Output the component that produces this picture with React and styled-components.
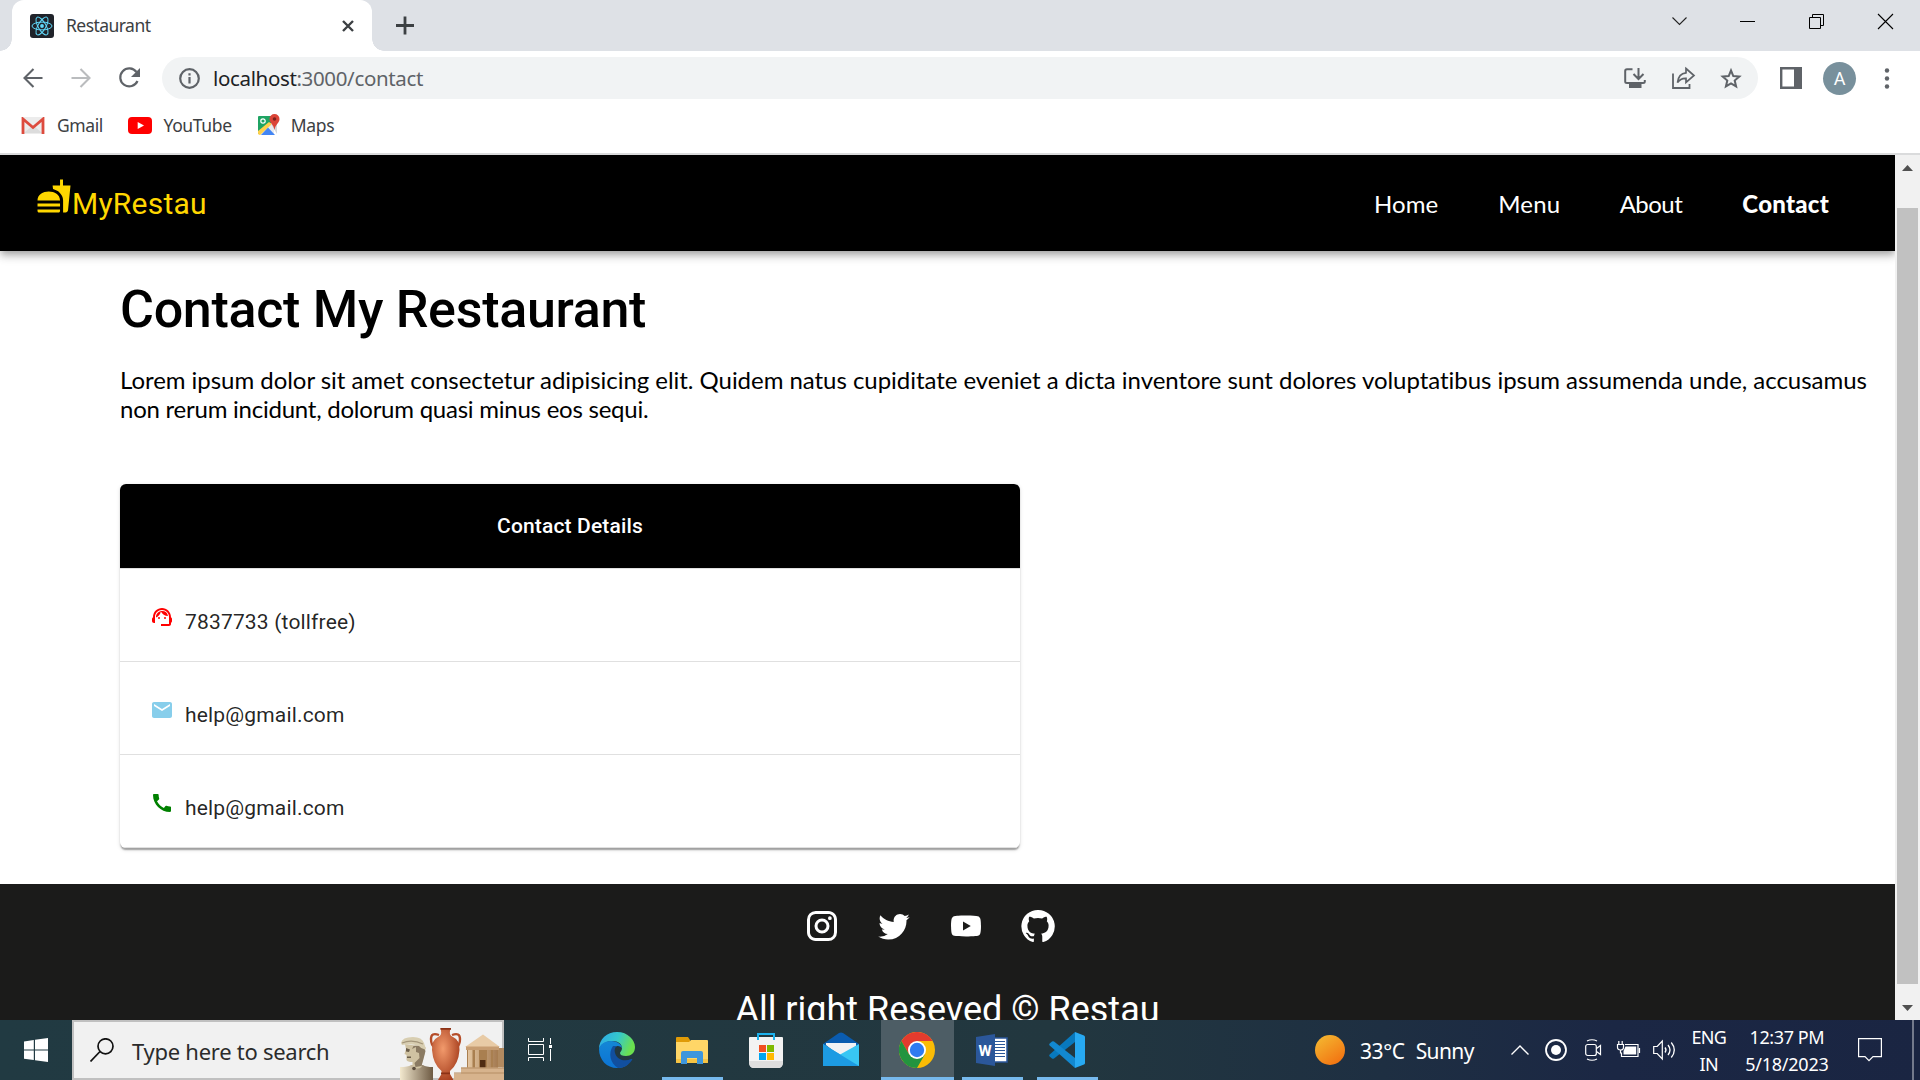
import React from "react";
import styled, { createGlobalStyle } from "styled-components";
import { MdSupportAgent, MdEmail, MdCall, MdFastfood } from "react-icons/md";

const Global = createGlobalStyle`
  * { box-sizing: border-box; }
  body { margin: 0; overflow: hidden; background: #fff; }
  svg { display: block; flex: none; }
`;

const SEGOE = `"Noto Sans", "Open Sans", sans-serif`;
const URBAN = `Lato, "Open Sans", sans-serif`;

const Screen = styled.div`
  width: 1920px;
  height: 1080px;
  display: flex;
  flex-direction: column;
  overflow: hidden;
  font-family: ${SEGOE};
  white-space: nowrap;
`;

const Label = styled.span`
  font-size: ${(p) => p.$size || 18}px;
  line-height: ${(p) => p.$lh || 24}px;
  letter-spacing: ${(p) => p.$ls || 0}px;
  color: ${(p) => p.$color || "inherit"};
  margin-left: ${(p) => p.$ml || 0}px;
  padding-top: ${(p) => p.$pt || 0}px;
  padding-bottom: ${(p) => p.$pb || 0}px;
  flex: none;
`;

const Glyph = styled.svg`
  margin-left: ${(p) => p.$ml || 0}px;
  overflow: visible;
`;

/* ---------- browser chrome ---------- */
const TabStrip = styled.div`
  height: 51px;
  flex: none;
  background: #dee1e6;
  display: flex;
  align-items: stretch;
`;
const TabCurve = styled.div`
  width: 12px;
  height: 12px;
  align-self: flex-end;
  background: radial-gradient(circle at ${(p) => (p.$right ? "100%" : "0")} 0, #dee1e6 11.5px, #fff 12px);
`;
const Tab = styled.div`
  width: 360px;
  background: #fff;
  border-radius: 12px 12px 0 0;
  display: flex;
  align-items: center;
  padding: 0 18px;
  color: #3c4043;
`;
const Favicon = styled.div`
  width: 24px;
  height: 24px;
  border-radius: 3px;
  background: #20232a;
  display: grid;
  place-items: center;
`;
const Spacer = styled.div`
  flex: 1;
`;
const WindowButtons = styled.div`
  display: flex;
  align-items: center;
  height: 43px;
  padding-right: 27px;
`;
const Toolbar = styled.div`
  height: 54px;
  flex: none;
  background: #fff;
  display: flex;
  align-items: center;
  padding: 0 0 0 23px;
`;
const Omnibox = styled.div`
  width: 1596px;
  height: 42px;
  border-radius: 21px;
  margin-left: 22px;
  background: #f1f3f4;
  display: flex;
  align-items: center;
  padding: 0 16px 0 17px;
`;
const Host = styled.span`
  color: #202124;
`;
const Avatar = styled.div`
  width: 33px;
  height: 33px;
  border-radius: 50%;
  margin-left: 21px;
  background: #78909c;
  color: #fff;
  font: 400 18px/34px Roboto, sans-serif;
  text-align: center;
`;
const Bookmarks = styled.div`
  height: 50px;
  flex: none;
  display: flex;
  align-items: center;
  padding: 0 0 8px 21px;
  border-bottom: 2px solid #dadbdc;
  background: #fff;
  color: #3c4043;
`;

/* ---------- page ---------- */
const Viewport = styled.div`
  flex: 1;
  min-height: 0;
  display: flex;
`;
const Page = styled.main`
  width: 1895px;
  height: 865px;
  display: flex;
  flex-direction: column;
  overflow: hidden;
  background: #fff;
`;
const NavBar = styled.header`
  height: 96px;
  flex: none;
  background: #000;
  display: flex;
  align-items: center;
  padding: 0 66px 0 36px;
  box-shadow: 0 3px 6px -1.5px rgba(0, 0, 0, 0.2), 0 6px 7.5px rgba(0, 0, 0, 0.14),
    0 1.5px 15px rgba(0, 0, 0, 0.12);
`;
const Brand = styled.div`
  flex: 1;
  display: flex;
  align-items: center;
  color: #ffd700;
  font: 400 30px/48px Roboto, sans-serif;
  letter-spacing: 0.225px;
  padding-top: 2px;
  svg {
    margin-top: -17px;
  }
`;
const NavLink = styled.a`
  font-family: ${URBAN};
  font-size: 24px;
  line-height: 30px;
  padding-top: 1px;
  margin-left: ${(p) => p.$ml || 0}px;
  letter-spacing: ${(p) => p.$ls || 0}px;
  font-weight: ${(p) => (p.$active ? 900 : 400)};
  color: #fff;
`;
const Content = styled.section`
  padding: 0 0 0 120px;
  height: 633px;
  flex: none;
`;
const Heading = styled.h1`
  margin: 23px 0 0;
  font: 500 52px/72px Roboto, sans-serif;
  letter-spacing: -0.3px;
  color: #000;
`;
const Paragraph = styled.p`
  margin: 19px 0 0;
  font: 400 24px/29px ${URBAN};
  font-variant-ligatures: none;
  color: #000;
`;
const Line = styled.span`
  display: block;
  letter-spacing: ${(p) => p.$ls}px;
`;
const ContactTable = styled.div`
  width: 900px;
  margin-top: 61px;
  border-radius: 6px;
  overflow: hidden;
  background: #fff;
  box-shadow: 0 3px 1.5px -1.5px rgba(0, 0, 0, 0.2), 0 1.5px 1.5px rgba(0, 0, 0, 0.14),
    0 1.5px 4.5px rgba(0, 0, 0, 0.12);
`;
const TableHead = styled.div`
  height: 85px;
  background: #000;
  border-bottom: 1px solid #e0e0e0;
  color: #fff;
  font: 500 21px/84px Roboto, sans-serif;
  letter-spacing: 0.15px;
  text-align: center;
`;
const TableRow = styled.div`
  height: 93px;
  border-bottom: 1px solid #e0e0e0;
  display: flex;
  align-items: flex-start;
  padding: 36px 0 0 30px;
  color: rgba(0, 0, 0, 0.87);
  font: 400 21px/34px Roboto, sans-serif;
  letter-spacing: 0.17px;
`;
const RowText = styled.span`
  margin-left: 11px;
`;
const Footer = styled.footer`
  flex: 1;
  background: #1b1b1a;
  color: #fff;
  padding-top: 24px;
  overflow: hidden;
`;
const Socials = styled.div`
  display: flex;
  gap: 36px;
  padding-left: 804px;
`;
const Copyright = styled.div`
  margin-top: 42px;
  text-align: center;
  font: 400 36px/48px Roboto, sans-serif;
`;
const ScrollBar = styled.div`
  width: 25px;
  background: #f1f1f1;
  display: flex;
  flex-direction: column;
  align-items: center;
  padding: 10px 0 0;
`;
const Thumb = styled.div`
  width: 21px;
  height: 776px;
  flex: none;
  margin: 37px 0 21px;
  background: #c1c1c1;
`;

/* ---------- taskbar ---------- */
const TaskBar = styled.div`
  height: 60px;
  flex: none;
  display: flex;
  align-items: center;
  background: linear-gradient(90deg, #213a42 0, #22373f 55%, #1e2f42 72%, #1b2744 84%, #1a2542 100%);
  color: #fff;
`;
const StartButton = styled.div`
  width: 72px;
  padding-left: 24px;
`;
const SearchBox = styled.div`
  width: 432px;
  height: 60px;
  background: #f1f1f1;
  border: 2px solid #c0c0c0;
  display: flex;
  align-items: center;
  color: #2b2b2b;
  padding-left: 16px;
`;
const Artwork = styled.svg`
  align-self: flex-end;
  margin: 0 -2px -2px 0;
`;
const AppButton = styled.div`
  width: ${(p) => p.$w}px;
  height: 60px;
  margin-left: ${(p) => p.$ml || 0}px;
  background: ${(p) => (p.$active ? "#4d5d65" : "transparent")};
  border-bottom: 3px solid ${(p) => (p.$open ? "#76b9ed" : "transparent")};
  padding: 3px 1px 0 0;
  display: grid;
  place-items: center;
`;
const Sun = styled.div`
  width: 30px;
  height: 30px;
  border-radius: 50%;
  margin-left: 217px;
  background: linear-gradient(145deg, #f4bd33, #f2690d);
`;
const Stack = styled.div`
  display: flex;
  flex-direction: column;
  align-items: center;
  width: ${(p) => p.$w}px;
  margin-left: ${(p) => p.$ml}px;
  padding-top: 1px;
`;
const ShowDesktop = styled.div`
  width: 2px;
  height: 60px;
  background: #737a8c;
  margin-left: 30px;
`;

const stroke = (c, w = 2) => ({ fill: "none", stroke: c, strokeWidth: w });

function ReactMark() {
  return (
    <svg width="22" height="22" viewBox="-11 -11 22 22" fill="none" stroke="#61dafb" strokeWidth="1">
      <circle r="1.9" fill="#61dafb" stroke="none" />
      {[0, 60, 120].map((a) => (
        <ellipse key={a} rx="10" ry="3.9" transform={`rotate(${a})`} />
      ))}
    </svg>
  );
}

function Maps() {
  return (
    <Glyph $ml={26} width="22" height="22" viewBox="0 0 22 22">
      <path d="M1 2h15v19H2q-1 0-1-1z" fill="#e8eaed" />
      <path d="M0 3q0-1 1-1h13v6L1 20q-1 0-1-1z" fill="#1fa463" />
      <path d="M0 17L11 8l3 2L2 21q-2 0-2-2z" fill="#ffd04b" />
      <path d="M3 21l7-7.500 7 7.500z" fill="#4285f4" />
      <path d="M13 10l6 10V9z" fill="#d5d7da" />
      <circle cx="5" cy="7" r="2.200" fill="none" stroke="#fff" strokeWidth="1.200" />
      <path d="M16.500 0a5 5 0 0 1 5 5c0 4-4 5-5 11-1-6-5-7-5-11a5 5 0 0 1 5-5z" fill="#db4437" />
      <circle cx="16.500" cy="5" r="1.800" fill="#7b231e" />
    </Glyph>
  );
}

function Museum() {
  return (
    <Artwork width="104" height="52" viewBox="0 0 104 52">
      <defs>
        <linearGradient id="stone" x1="0" x2="1"><stop offset="0" stopColor="#f3e9cf" /><stop offset="1" stopColor="#6d5a43" /></linearGradient>
        <radialGradient id="clay" cx=".4" cy=".4" r=".65"><stop offset="0" stopColor="#f29a6c" /><stop offset="1" stopColor="#a8401f" /></radialGradient>
        <linearGradient id="sand" x1="0" x2="1"><stop offset="0" stopColor="#e3c5a0" /><stop offset="1" stopColor="#a57b52" /></linearGradient>
      </defs>
      <path d="M0 39q8 0 11-2h12q3 2 10 2v13H0z" fill="url(#stone)" />
      <path d="M5 16l1 5-1.500 5 2 1v5q1 2 6 2v5q5 3 9 0l1-7q3-6 3-13z" fill="#cfc2a2" />
      <path d="M12 21l4-2v5l3 1 .500 5-5 5 1 4 6-1 2-7 2-8-3-6-9 1z" fill="#8a7a62" />
      <path d="M6 20l4 1.500-1 2.500-3-.5zM7 28.500h4v1.500H7z" fill="#6b5d49" />
      <path d="M1 15Q2 9 13 9q9 0 11 6l2 6q-4 1-7-3-8-3-17-1z" fill="#d8ceb1" />
      <path d="M2 15q10-4 21 1" fill="none" stroke="#a4967a" strokeWidth="1.300" />
      <circle cx="14" cy="40.500" r="1.800" fill="#5b4d3c" />
      <path d="M39 7q-8-3-8 4 0 6 4 9M52 7q8-3 8 4 0 6-4 9" fill="none" stroke="#b54d29" strokeWidth="2.400" />
      <path d="M40.500 0h10.500l-1 2.500q-1 5 3 6.500 7 3 6.500 13-1 14-9.500 21v3l3.500 6H38l3.500-6v-3Q33 36 32 22q-.500-10 6-13 4-1.500 3-6.500z" fill="url(#clay)" />
      <path d="M40.500 0h10.500v1.800H40.500zM41 44.500h9v1.800h-9z" fill="#8c3216" />
      <path d="M98 20h6v19h-6z" fill="#b18a60" />
      <path d="M67 20h31v20H67z" fill="#a97f50" />
      <path d="M65 19L83 6.500l17 12.500z" fill="#e8cba6" />
      <path d="M66 18.500h33v3.500H66z" fill="#c79d72" />
      <path d="M68 22h4.500v18H68zM75 22h4v18h-4zM87 22h4v18h-4zM93 22h4.500v18H93z" fill="url(#sand)" />
      <path d="M80 32h5.500v8H80z" fill="#4f2b12" />
      <path d="M61 39.500h43V52H54v-6.500h7z" fill="#d7b38d" />
      <path d="M61 40h43M54 45h50" stroke="#b58d64" strokeWidth="1.200" />
    </Artwork>
  );
}

function Edge() {
  return (
    <svg width="36" height="36" viewBox="0 0 36 36">
      <defs>
        <linearGradient id="e1" x1="0" x2="1" y1="0" y2=".3"><stop offset="0" stopColor="#2ba6ea" /><stop offset=".55" stopColor="#35c8cb" /><stop offset="1" stopColor="#6be04f" /></linearGradient>
        <linearGradient id="e2" x1="0" x2="0" y1="0" y2="1"><stop offset="0" stopColor="#1487d6" /><stop offset="1" stopColor="#0c73d4" /></linearGradient>
      </defs>
      <path d="M0 17C0 7 8 0 18 0c11 0 18 8 18 15 0 6-4 9-9 9-4 0-6-1-6-3 0-1 2-2 2-5 0-4-4-7-9-7C7 9 2 12 0 17z" fill="url(#e1)" />
      <path d="M0 17c1-5 6-8 12-8 7 0 11 4 11 7-2-2-4-2-5-2-6 2-6 10-2 14 3 4 9 5 13 4-3 3-7 4-11 4C8 36 0 28 0 17z" fill="url(#e2)" />
      <path d="M14 14c-5 7-3 17 5 22 6 0 11-3 14-8 1-1 0-1-1-1-6 3-14 1-16-6-1-3 0-6 2-7z" fill="#114f9f" />
    </svg>
  );
}

function Folder() {
  return (
    <svg width="36" height="36" viewBox="0 0 36 36">
      <path d="M2 6q0-1 1-1h11l2 3v4H2z" fill="#e09b07" />
      <path d="M2 10h13l2-2h16q1 0 1 1v21q0 1-1 1H3q-1 0-1-1z" fill="#ffd667" />
      <path d="M2 27h32v3q0 1-1 1H3q-1 0-1-1z" fill="#f7c443" />
      <path d="M7 32V21q0-2 2-2h18q2 0 2 2v11h-6v-6H13v6z" fill="#3e96dc" />
    </svg>
  );
}

function Store() {
  return (
    <svg width="36" height="36" viewBox="0 0 36 36">
      <path d="M10 8V2h16v6" {...stroke("#1cb2ee", 2)} />
      <path d="M1 6q0-1 1-1h32q1 0 1 1v24q0 6-5 6H6q-5 0-5-6z" fill="#f3f3f3" />
      <path d="M1 29q0 7 5 7h24q5 0 5-7z" fill="#dedede" />
      <path d="M10 4v4M26 4v4" {...stroke("#1cb2ee", 2)} />
      <path d="M11 13h7v7h-7z" fill="#f25022" />
      <path d="M19 13h7v7h-7z" fill="#7fba00" />
      <path d="M11 21h7v7h-7z" fill="#00a4ef" />
      <path d="M19 21h7v7h-7z" fill="#ffb900" />
    </svg>
  );
}

function Mail() {
  return (
    <svg width="36" height="36" viewBox="0 0 36 36">
      <path d="M0 12L16 1q2-1 4 0l16 11-8 6H8z" fill="#0a5cb0" />
      <path d="M3 11h30v3L18 25 3 13z" fill="#f2f2f4" />
      <path d="M0 12l18 11L0 34z" fill="#27a5e6" />
      <path d="M36 12L18 22 0 34h36z" fill="#38c6f4" />
      <path d="M0 12l36 22H0z" fill="#1d9be3" />
    </svg>
  );
}

function Chrome() {
  return (
    <svg width="36" height="36" viewBox="-18 -18 36 36">
      <circle r="18" fill="#fbbc05" />
      <path d="M-15.600-9A18 18 0 0 1 15.600-9H0L-7.800 4.500z" fill="#e33b2e" />
      <path d="M-15.600-9A18 18 0 0 0 0 18L7.800 4.500H-7.800z" fill="#23943f" />
      <circle r="9" fill="#fff" />
      <circle r="7.200" fill="#2f7bf0" />
    </svg>
  );
}

function Word() {
  return (
    <svg width="36" height="36" viewBox="0 0 36 36">
      <path d="M20 6h13v24H20z" fill="#fff" stroke="#2b579a" strokeWidth="1.500" />
      <path d="M21 9.500h10M21 12.500h10M21 15.500h10M21 18.500h10M21 21.500h10M21 24.500h10" stroke="#2b579a" strokeWidth="1.200" />
      <path d="M2 5l19-3v32L2 31z" fill="#2b579a" />
      <text x="11" y="23.500" fontFamily="Roboto, sans-serif" fontWeight="700" fontSize="15" fill="#fff" textAnchor="middle">W</text>
    </svg>
  );
}

function Code() {
  return (
    <svg width="36" height="36" viewBox="0 0 36 36">
      <path d="M26 0v10L5 26.500q-1 .6-2 0L.7 24.500q-1-1 0-2z" fill="#0879be" />
      <path d="M26 36V26L5 9.500q-1-.6-2 0L.7 11.500q-1 1 0 2z" fill="#1288d0" />
      <path d="M26 0l9 3.500q1 .5 1 1.500v26q0 1-1 1.500L26 36z" fill="#27a9f2" />
    </svg>
  );
}

const SOCIALS = [
  "M7.8 2h8.4C19.4 2 22 4.6 22 7.8v8.4a5.8 5.8 0 0 1-5.8 5.8H7.8C4.6 22 2 19.4 2 16.2V7.8A5.8 5.8 0 0 1 7.8 2m-.2 2A3.6 3.6 0 0 0 4 7.6v8.8C4 18.39 5.61 20 7.6 20h8.8a3.6 3.6 0 0 0 3.6-3.6V7.6C20 5.61 18.39 4 16.4 4H7.6m9.65 1.5a1.25 1.25 0 0 1 1.25 1.25A1.25 1.25 0 0 1 17.25 8 1.25 1.25 0 0 1 16 6.75a1.25 1.25 0 0 1 1.25-1.25M12 7a5 5 0 0 1 5 5 5 5 0 0 1-5 5 5 5 0 0 1-5-5 5 5 0 0 1 5-5m0 2a3 3 0 0 0-3 3 3 3 0 0 0 3 3 3 3 0 0 0 3-3 3 3 0 0 0-3-3z",
  "M22.46 6c-.77.35-1.6.58-2.46.69.88-.53 1.56-1.37 1.88-2.38-.83.5-1.75.85-2.72 1.05C18.37 4.5 17.26 4 16 4c-2.35 0-4.27 1.92-4.27 4.29 0 .34.04.67.11.98C8.28 9.09 5.11 7.38 3 4.79c-.37.63-.58 1.37-.58 2.15 0 1.49.75 2.81 1.91 3.56-.71 0-1.37-.2-1.95-.5v.03c0 2.08 1.48 3.82 3.44 4.21a4.22 4.22 0 0 1-1.93.07 4.28 4.28 0 0 0 4 2.98 8.521 8.521 0 0 1-5.33 1.84c-.34 0-.68-.02-1.02-.06C3.44 20.29 5.7 21 8.12 21 16 21 20.33 14.46 20.33 8.79c0-.19 0-.37-.01-.56.84-.6 1.56-1.36 2.14-2.23z",
  "M10 15l5.19-3L10 9v6m11.56-7.83c.13.47.22 1.1.28 1.9.07.8.1 1.49.1 2.09L22 12c0 2.19-.16 3.8-.44 4.83-.25.9-.83 1.48-1.73 1.73-.47.13-1.33.22-2.65.28-1.3.07-2.49.1-3.59.1L12 19c-4.19 0-6.8-.16-7.83-.44-.9-.25-1.48-.83-1.73-1.73-.13-.47-.22-1.1-.28-1.9-.07-.8-.1-1.49-.1-2.09L2 12c0-2.19.16-3.8.44-4.83.25-.9.83-1.48 1.73-1.73.47-.13 1.33-.22 2.65-.28 1.3-.07 2.49-.1 3.59-.1L12 5c4.19 0 6.8.16 7.83.44.9.25 1.48.83 1.73 1.73z",
  "M12 1.27a11 11 0 00-3.48 21.46c.55.09.73-.28.73-.55v-1.84c-3.03.64-3.67-1.46-3.67-1.46-.55-1.29-1.28-1.65-1.28-1.65-.92-.65.1-.65.1-.65 1.1 0 1.73 1.1 1.73 1.1.92 1.65 2.57 1.2 3.21.92a2 2 0 01.64-1.47c-2.47-.27-5.04-1.19-5.04-5.5 0-1.1.46-2.1 1.2-2.84a3.76 3.76 0 010-2.93s.91-.28 3.11 1.1c1.8-.49 3.7-.49 5.5 0 2.1-1.38 3.02-1.1 3.02-1.1a3.76 3.76 0 01.1 2.93c.83.74 1.2 1.74 1.2 2.94 0 4.21-2.57 5.13-5.04 5.4.45.37.82.92.82 2.02v3.03c0 .27.1.64.73.55A11 11 0 0012 1.27",
];

export default function App() {
  const g = "#5f6368";
  return (
    <Screen>
      <Global />
      <TabStrip>
        <TabCurve />
        <Tab>
          <Favicon><ReactMark /></Favicon>
          <Label $ml={12} $size={17.5} $ls={-0.55} $pb={2}>Restaurant</Label>
          <Spacer />
          <Glyph width="12" height="12" viewBox="0 0 12 12"><path d="M1 1l10 10M11 1L1 11" {...stroke("#3c4043", 2.4)} /></Glyph>
        </Tab>
        <TabCurve $right />
        <Glyph $ml={12} width="18" height="51" viewBox="0 0 18 51"><path d="M0 25.500h18M9 16.500v18" {...stroke("#3c4043", 2.8)} /></Glyph>
        <Spacer />
        <WindowButtons>
          <Glyph width="15" height="9" viewBox="0 0 15 9"><path d="M.5.500l7 7 7-7" {...stroke("#222", 1.1)} /></Glyph>
          <Glyph $ml={53} width="15" height="15" viewBox="0 0 15 15"><path d="M0 7.500h15" {...stroke("#000", 1)} /></Glyph>
          <Glyph $ml={54} width="15" height="15" viewBox="0 0 15 15"><path d="M.5 3.500h11v11H.500zM3.500 3V.500h11v11H12" {...stroke("#000", 1)} /></Glyph>
          <Glyph $ml={54} width="15" height="15" viewBox="0 0 15 15"><path d="M0 0l15 15M15 0L0 15" {...stroke("#000", 1.1)} /></Glyph>
        </WindowButtons>
      </TabStrip>
      <Toolbar>
        <Glyph width="20" height="20" viewBox="0 0 20 20"><path d="M19.500 10H2M10.500 1L1.500 10l9 9" {...stroke(g, 2.1)} /></Glyph>
        <Glyph $ml={28} width="20" height="20" viewBox="0 0 20 20"><path d="M.5 10H18M9.500 1l9 9-9 9" {...stroke("#babcbe", 2.1)} /></Glyph>
        <Glyph $ml={28} width="21" height="20" viewBox="0 0 21 20"><path d="M17.500 4A9 9 0 1 0 18.500 13" {...stroke(g, 2.2)} /><path d="M21 0v9h-9z" fill={g} /></Glyph>
        <Omnibox>
          <svg width="21" height="21" viewBox="0 0 21 21"><circle cx="10.500" cy="10.500" r="9.300" {...stroke(g, 2.2)} /><path d="M10.500 9v6.500M10.500 5.200v2.300" {...stroke(g, 2.2)} /></svg>
          <Label $ml={13} $size={20.5} $lh={28} $ls={-0.35} $color={g}><Host>localhost</Host>:3000/contact</Label>
          <Spacer />
          <svg width="22" height="20" viewBox="0 0 22 20"><path d="M8.500 1.200H3Q1.200 1.200 1.200 3v10.500q0 1.500 1.800 1.500h16q1.800 0 1.800-1.500V12M14.500 0v10.500M9.500 6l5 5 5-5" {...stroke(g, 2)} /><path d="M5 15h12.500v5H5z" fill={g} /></svg>
          <Glyph $ml={26} width="23" height="22" viewBox="0 0 23 22"><path d="M1 6.500V21h16.500v-4" {...stroke(g, 1.8)} /><path d="M14 1.500L22 8.500l-8 7v-4.200Q8.500 11 5.500 15.500 6.500 6.500 14 5.800z" {...stroke(g, 1.7)} /></Glyph>
          <Glyph $ml={25} width="22" height="21" viewBox="0 0 22 21"><path d="M11 2.500l2.300 5.600 6 .5-4.600 3.900 1.400 5.900L11 15.300l-5.100 3.100 1.400-5.900L2.700 8.600l6-.5z" {...stroke(g, 2)} /></Glyph>
        </Omnibox>
        <Glyph $ml={22} width="22" height="22" viewBox="0 0 22 22"><path d="M1.200 1.200h19.600v19.600H1.200z" {...stroke(g, 2.4)} /><path d="M14 1h8v20h-8z" fill={g} /></Glyph>
        <Avatar>A</Avatar>
        <Glyph $ml={29} width="5" height="21" viewBox="0 0 5 21"><circle cx="2" cy="2.500" r="2.200" fill={g} /><circle cx="2" cy="10.500" r="2.200" fill={g} /><circle cx="2" cy="18.500" r="2.200" fill={g} /></Glyph>
      </Toolbar>
      <Bookmarks>
        <svg width="24" height="17" viewBox="0 0 24 17"><path d="M2 0h20v17H2z" fill="#ececec" /><path d="M3 16l9-8 9 8z" fill="#dcdcdc" /><path d="M2 17V2l10 8.500L22 2v15" {...stroke("#dd4b3e", 2.8)} /></svg>
        <Label $ml={12} $size={17.5} $ls={-0.4}>Gmail</Label>
        <Glyph $ml={25} width="24" height="17" viewBox="0 0 24 17"><rect width="24" height="17" rx="4" fill="#f00" /><path d="M9.700 4.900v7.200L16 8.500z" fill="#fff" /></Glyph>
        <Label $ml={11.5} $size={17.5} $ls={-0.35}>YouTube</Label>
        <Maps />
        <Label $ml={11} $size={17.5} $ls={-0.3}>Maps</Label>
      </Bookmarks>

      <Viewport>
        <Page>
          <NavBar>
            <Brand><MdFastfood size={36} />MyRestau</Brand>
            <NavLink $ls={0.1}>Home</NavLink>
            <NavLink $ml={60} $ls={0.1}>Menu</NavLink>
            <NavLink $ml={59.5} $ls={-0.5}>About</NavLink>
            <NavLink $ml={60} $ls={0.25} $active>Contact</NavLink>
          </NavBar>
          <Content>
            <Heading>Contact My Restaurant</Heading>
            <Paragraph>
              <Line $ls={-0.04}>Lorem ipsum dolor sit amet consectetur adipisicing elit. Quidem natus cupiditate eveniet a dicta inventore sunt dolores voluptatibus ipsum assumenda unde, accusamus</Line>
              <Line $ls={-0.24}>non rerum incidunt, dolorum quasi minus eos sequi.</Line>
            </Paragraph>
            <ContactTable>
              <TableHead>Contact Details</TableHead>
              <TableRow><MdSupportAgent size={24} color="red" /><RowText>7837733 (tollfree)</RowText></TableRow>
              <TableRow><MdEmail size={24} color="skyblue" /><RowText>help@gmail.com</RowText></TableRow>
              <TableRow><MdCall size={24} color="green" /><RowText>help@gmail.com</RowText></TableRow>
            </ContactTable>
          </Content>
          <Footer>
            <Socials>
              {SOCIALS.map((d) => (
                <svg key={d} width="36" height="36" viewBox="0 0 24 24" fill="#fff"><path d={d} /></svg>
              ))}
            </Socials>
            <Copyright>All right Reseved © Restau</Copyright>
          </Footer>
        </Page>
        <ScrollBar>
          <svg width="11" height="6" viewBox="0 0 11 6"><path d="M0 6l5.500-6L11 6z" fill="#505050" /></svg>
          <Thumb />
          <svg width="11" height="6" viewBox="0 0 11 6"><path d="M0 0l5.500 6L11 0z" fill="#505050" /></svg>
        </ScrollBar>
      </Viewport>

      <TaskBar>
        <StartButton>
          <svg width="24" height="24" viewBox="0 0 24 24" fill="#fff"><path d="M0 3.400L9.800 2v9.500H0zM11 1.800L24 0v11.500H11zM0 12.600h9.800v9.500L0 20.700zM11 12.600h13V24l-13-1.800z" /></svg>
        </StartButton>
        <SearchBox>
          <svg width="24" height="24" viewBox="0 0 24 24"><circle cx="15.500" cy="8.300" r="7.500" {...stroke("#111", 1.7)} /><path d="M10 13.500L.5 23.500" {...stroke("#111", 1.7)} /></svg>
          <Label $ml={18} $size={22} $lh={32} $ls={-0.27} $pt={2}>Type here to search</Label>
          <Spacer />
          <Museum />
        </SearchBox>
        <Glyph $ml={24} width="24" height="24" viewBox="0 0 24 24"><path d="M.5 0v3.500h15V0M.5 6.500h15v10h-15zM.5 23v-3.500h15V23M22.500 0v6M22.500 11v12" {...stroke("#fff", 1)} /><path d="M21 7h3v3h-3z" fill="#fff" /></Glyph>
        <AppButton $w={61} $ml={35}><Edge /></AppButton>
        <AppButton $w={61} $ml={14} $open><Folder /></AppButton>
        <AppButton $w={61} $ml={13}><Store /></AppButton>
        <AppButton $w={61} $ml={14}><Mail /></AppButton>
        <AppButton $w={73} $ml={9} $open $active><Chrome /></AppButton>
        <AppButton $w={61} $ml={8} $open><Word /></AppButton>
        <AppButton $w={61} $ml={14} $open><Code /></AppButton>
        <Sun />
        <Label $ml={15} $size={21} $ls={-0.4} $pt={2}>33°C</Label>
        <Label $ml={11} $size={21} $ls={-0.6} $pt={2}>Sunny</Label>
        <Glyph $ml={37} width="18" height="10" viewBox="0 0 18 10"><path d="M.5 9.500L9 1l8.500 8.500" {...stroke("#fff", 1.4)} /></Glyph>
        <Glyph $ml={16} width="22" height="22" viewBox="0 0 22 22"><circle cx="11" cy="11" r="10" {...stroke("#fff", 1.8)} /><circle cx="11" cy="11" r="5" fill="#fff" /></Glyph>
        <Glyph $ml={18} width="16" height="22" viewBox="0 0 16 22"><rect x=".7" y="5.500" width="10.600" height="11" rx="2" {...stroke("#fff", 1.2)} /><path d="M11.500 9.500l4-3v9l-4-3M2 2q5-2.500 10 0M2 20q5 2.500 10 0" {...stroke("#fff", 1.2)} /></Glyph>
        <Glyph $ml={15} width="24" height="18" viewBox="0 0 24 18"><path d="M9 3.500h13v12H5.500v-4M23.500 7v5" {...stroke("#fff", 1.2)} /><path d="M9.500 5.500h10.700v8H7.500V10z" fill="#fff" /><path d="M1.500 3.500h6v3q0 2.500-3 2.500t-3-2.500zM2.800 0v3M6.200 0v3M4.500 9v3.500" {...stroke("#fff", 1.2)} /></Glyph>
        <Glyph $ml={13} width="22" height="20" viewBox="0 0 22 20"><path d="M.7 6.500h3.500L9.300 1v18l-5.100-5.500H.7z" {...stroke("#fff", 1.2)} /><path d="M12 7.500q2 2.500 0 5M15 5q4 5 0 10M18.300 2.500q6 7.500 0 15" {...stroke("#fff", 1.3)} /></Glyph>
        <Stack $w={40} $ml={14}>
          <Label $lh={27} $size={18} $ls={-0.6}>ENG</Label>
          <Label $lh={27} $size={18} $ls={-0.5}>IN</Label>
        </Stack>
        <Stack $w={100} $ml={8}>
          <Label $lh={27} $size={18} $ls={-0.4}>12:37 PM</Label>
          <Label $lh={27} $size={18} $ls={-0.25}>5/18/2023</Label>
        </Stack>
        <Glyph $ml={21} width="24" height="24" viewBox="0 0 24 24"><path d="M.6.600h22.800v18H15l-4 4-4-4H.600z" {...stroke("#fff", 1.2)} /></Glyph>
        <ShowDesktop />
      </TaskBar>
    </Screen>
  );
}
